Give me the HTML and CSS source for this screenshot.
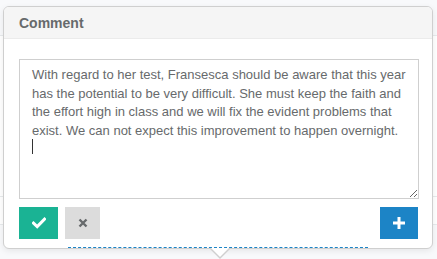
FILE: index.html
```html
<!DOCTYPE html>
<html lang="en">
<head>
<meta charset="utf-8">
<title>Comment</title>
<link rel="stylesheet" href="styles.css">
</head>
<body>
<div class="page">
  <div class="bg-top"></div>
  <div class="bg-row bg-row-tall"></div>
  <div class="bg-row bg-row-short"></div>
  <div class="bg-bottom"></div>
</div>
<span class="editable-underline"></span>
<div class="popover">
  <div class="popover-title">Comment</div>
  <div class="popover-body">
    <div class="field">
      <textarea class="comment-input">With regard to her test, Fransesca should be aware that this year has the potential to be very difficult. She must keep the faith and the effort high in class and we will fix the evident problems that exist. We can not expect this improvement to happen overnight.
</textarea>
      <span class="caret"></span>
    </div>
    <div class="actions">
      <button class="btn btn-ok" type="button" aria-label="Save">
        <svg width="14" height="12" viewBox="0 0 14 12"><path d="M1.5 6.2 L5.2 9.6 L12.5 2.2" fill="none" stroke="#fff" stroke-width="3" stroke-linecap="square"/></svg>
      </button>
      <button class="btn btn-cancel" type="button" aria-label="Cancel">
        <svg width="10" height="10" viewBox="0 0 10 10"><path d="M1.5 1.5 L8.5 8.5 M8.5 1.5 L1.5 8.5" fill="none" stroke="#676a6c" stroke-width="2.4"/></svg>
      </button>
      <button class="btn btn-add" type="button" aria-label="Add">
        <svg width="14" height="14" viewBox="0 0 14 14"><path d="M7 1 V13 M1 7 H13" fill="none" stroke="#fff" stroke-width="3"/></svg>
      </button>
    </div>
  </div>
  <div class="arrow"></div>
</div>
</body>
</html>
```
FILE: styles.css
```css
html, body {
  margin: 0;
  padding: 0;
}
body {
  background: #ffffff;
  font-family: "Liberation Sans", Arial, sans-serif;
  width: 437px;
  height: 259px;
  overflow: hidden;
  position: relative;
}
.page {
  display: flex;
  flex-direction: column;
  height: 259px;
}
.bg-top {
  height: 35px;
  background: #f8f9fb;
  border-bottom: 1px solid #e7eaec;
}
.bg-row {
  border-bottom: 1px solid #e7eaec;
}
.bg-row-tall { height: 160px; }
.bg-row-short { height: 27px; }
.bg-bottom {
  flex: 1;
  background: #f8f9fb;
}
.editable-underline {
  position: absolute;
  left: 68px;
  top: 247px;
  width: 300px;
  height: 0;
  border-bottom: 1px dashed #1c84c6;
  z-index: 3;
}
.popover {
  position: absolute;
  left: 3px;
  top: 6px;
  width: 428px;
  height: 241px;
  background: #fff;
  border: 1px solid #cfcfcf;
  border-radius: 6px;
  box-shadow: 0 2px 6px rgba(0,0,0,0.08);
  z-index: 2;
  display: flex;
  flex-direction: column;
}
.popover-title {
  height: 32px;
  box-sizing: border-box;
  background: #f5f5f5;
  border-bottom: 1px solid #ebebeb;
  border-radius: 5px 5px 0 0;
  padding: 0 15px;
  font-size: 14px;
  font-weight: bold;
  color: #676a6c;
  line-height: 32px;
}
.popover-body {
  padding: 20px 14px 0 15px;
  display: flex;
  flex-direction: column;
  gap: 8px;
}
.field {
  position: relative;
}
.comment-input {
  display: block;
  box-sizing: border-box;
  width: 400px;
  height: 140px;
  margin: 0;
  padding: 6px 12px;
  border: 1px solid #cfcfcf;
  border-radius: 0;
  font-family: "Liberation Sans", Arial, sans-serif;
  font-size: 13px;
  line-height: 18.6px;
  color: #676a6c;
  background: #fff;
  outline: none;
  resize: vertical;
}
.caret {
  position: absolute;
  left: 13px;
  top: 80px;
  width: 1px;
  height: 15px;
  background: #333;
}
.actions {
  display: flex;
  gap: 7px;
}
.btn {
  height: 32px;
  border: none;
  border-radius: 0;
  padding: 0;
  margin: 0;
  display: flex;
  align-items: center;
  justify-content: center;
  cursor: pointer;
}
.btn-ok {
  width: 39px;
  background: #1ab394;
}
.btn-cancel {
  width: 35px;
  background: #dcdcdc;
}
.btn-add {
  width: 38px;
  background: #1c84c6;
  margin-left: auto;
}
.arrow {
  position: absolute;
  left: 205px;
  bottom: -11px;
  width: 0;
  height: 0;
  border-left: 11px solid transparent;
  border-right: 11px solid transparent;
  border-top: 11px solid #cfcfcf;
}
.arrow::after {
  content: "";
  position: absolute;
  left: -10px;
  top: -12px;
  width: 0;
  height: 0;
  border-left: 10px solid transparent;
  border-right: 10px solid transparent;
  border-top: 10px solid #fff;
}
```
